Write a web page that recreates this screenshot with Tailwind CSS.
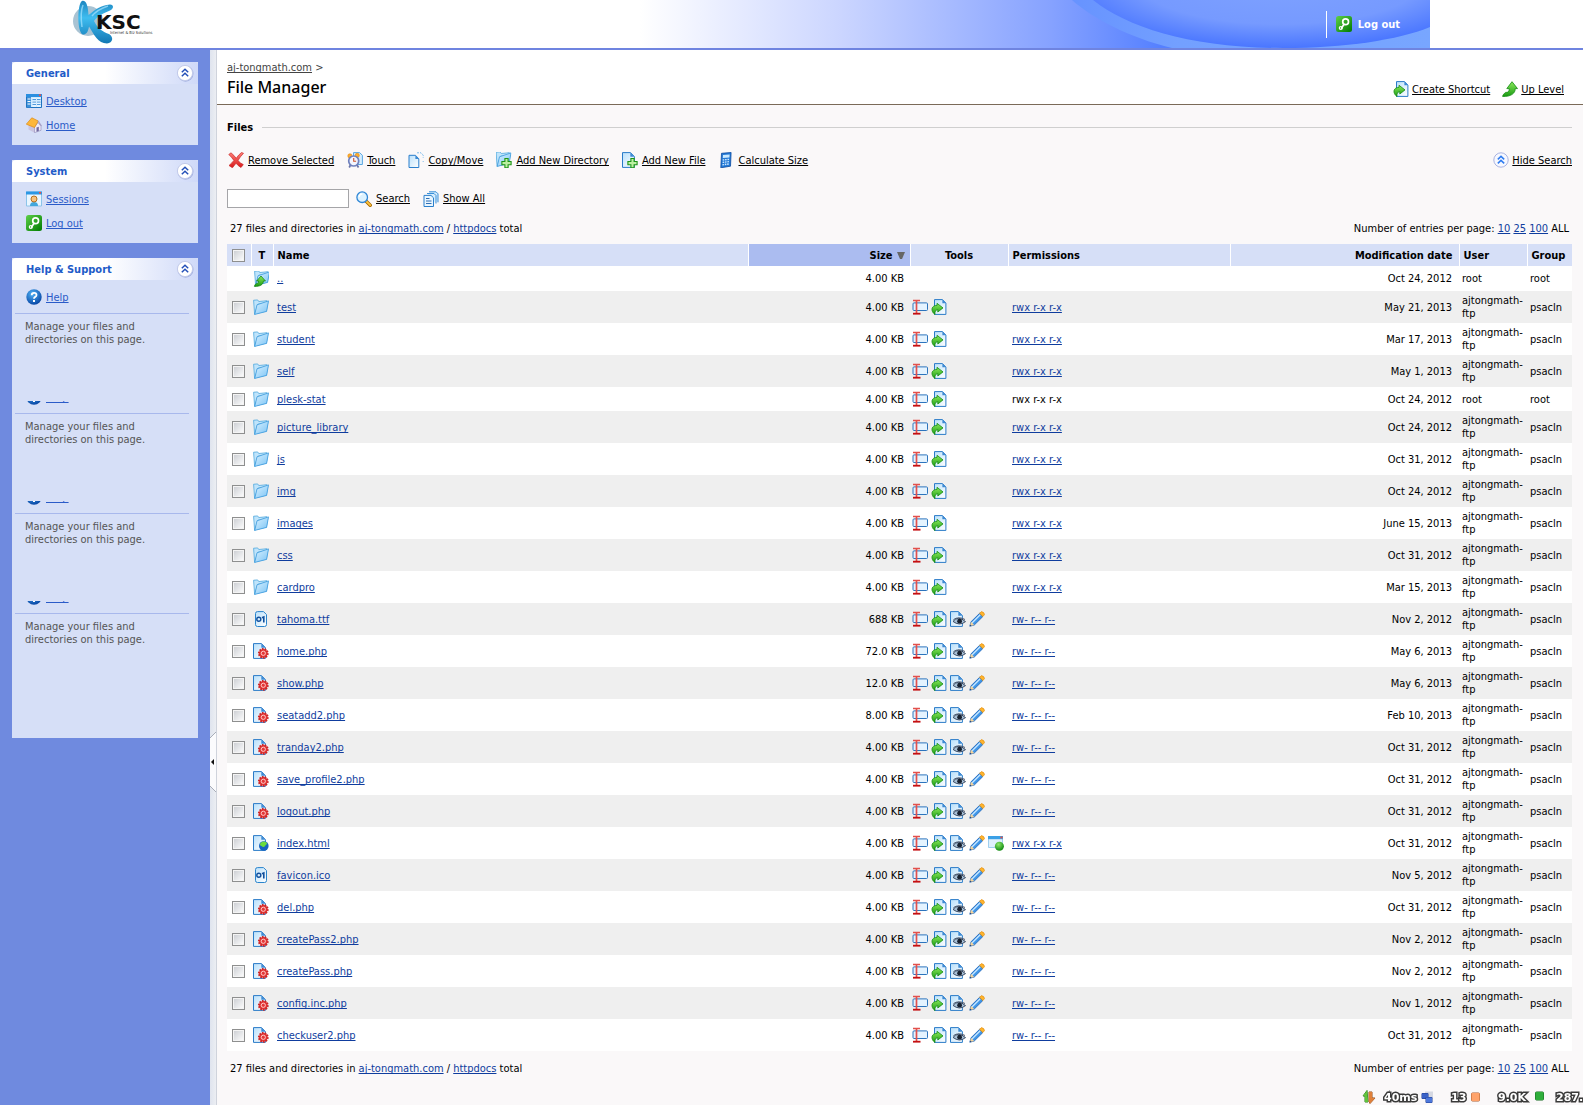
<!DOCTYPE html>
<html lang="en">
<head>
<meta charset="utf-8">
<title>File Manager</title>
<script src="https://cdn.jsdelivr.net/npm/@tailwindcss/browser@4"></script>
</head>
<body class="flex min-h-screen flex-col bg-[#faf8f9] font-['DejaVu_Sans_Condensed','Liberation_Sans',sans-serif] text-[11px] leading-[13px] text-black [text-decoration-skip-ink:none]">

<!-- Icon sprite; zero-sized rather than hidden, so that its gradients stay usable -->
<svg class="absolute size-0" aria-hidden="true">
  <defs>
    <linearGradient id="gBlue" x1="0" y1="0" x2="1" y2="1"><stop offset="0" stop-color="#d9f1ff"/><stop offset="1" stop-color="#7cc4f5"/></linearGradient>
    <linearGradient id="gPage" x1="0" y1="0" x2="1" y2="1"><stop offset="0" stop-color="#b9e0fb"/><stop offset="1" stop-color="#ffffff"/></linearGradient>
    <linearGradient id="gGreen" x1="0" y1="0" x2="0" y2="1"><stop offset="0" stop-color="#8bea5c"/><stop offset="1" stop-color="#1a9a12"/></linearGradient>
    <linearGradient id="gKey" x1="0" y1="0" x2="1" y2="1"><stop offset="0" stop-color="#5fd04a"/><stop offset="1" stop-color="#007a00"/></linearGradient>
    <linearGradient id="gRed" x1="0" y1="0" x2="0" y2="1"><stop offset="0" stop-color="#ff7f77"/><stop offset="1" stop-color="#d8191c"/></linearGradient>
    <radialGradient id="gHelp" cx=".4" cy=".3" r=".8"><stop offset="0" stop-color="#4fb2f5"/><stop offset="1" stop-color="#003a9c"/></radialGradient>
    <radialGradient id="gBall" cx=".4" cy=".3" r=".7"><stop offset="0" stop-color="#8ee86a"/><stop offset="1" stop-color="#0f8a10"/></radialGradient>
    <linearGradient id="gLogo" x1="0" y1="0" x2="0" y2="1"><stop offset="0" stop-color="#1d86c0"/><stop offset=".4" stop-color="#3fbdf0"/><stop offset="1" stop-color="#1277b4"/></linearGradient>
  </defs>
  <symbol id="folder" viewBox="0 0 16 16"><path d="M.6 1.2 4.6.9l1.2 1.6L14 1.7v1.8l1.4-.5-1.6 9.6L1.6 15.4Z" fill="#6fbcf0"/><path d="M.6 1.2 4.6.9l1.2 1.6 8-.8v2L5 5.2 1.6 15.4Z" fill="#bfe4fb" stroke="#5badde" stroke-width=".8"/><path d="M4 5.8 15.5 1.9 13.6 12.4 1.7 15.4Z" fill="url(#gBlue)" stroke="#3e9bdc" stroke-width=".8"/></symbol>
  <symbol id="folderup" viewBox="0 0 16 16"><use href="#folder" width="16" height="16" x="1" y="-1"/><path d="M8 5 12.5 10H10.4c0 3.400-3.200 5.700-9 5.400 0-1 1-2.200 2-3 1.400.4 2.200-.8 2.200-2.400H3.600Z" fill="url(#gGreen)" stroke="#0c7d0b" stroke-width=".7"/></symbol>
  <symbol id="page" viewBox="0 0 16 16"><path d="M2.500.6h8l3.900 4v10.800H2.500Z" fill="url(#gPage)" stroke="#2a7bc8"/><path d="M10.300.6v4.200h4Z" fill="#3d8ad4"/></symbol>
  <symbol id="php" viewBox="0 0 16 16"><use href="#page" width="16" height="16" x="-2"/><circle cx="10.300" cy="10.300" r="4.400" fill="#e23a3a" stroke="#cf2424" stroke-width="2" stroke-dasharray="1.600 1.100"/><circle cx="10.300" cy="10.300" r="2.100" fill="none" stroke="#ffc9c5" stroke-width="1"/></symbol>
  <symbol id="html" viewBox="0 0 16 16"><use href="#page" width="16" height="16" x="-2"/><circle cx="10.800" cy="11" r="4.800" fill="#1764c0"/><path d="M7 9c1-2.500 4-3.200 6.500-1.500 1.300 1.500-.5 2-1.500 3.500s-1.800 1-2.800.4S7 11 7 9Z" fill="#6bdc3c"/></symbol>
  <symbol id="bin" viewBox="0 0 16 16"><path d="M2.500 2.500q0-1.900 2-1.900h6l3 3v10q0 1.900-2 1.900h-7q-2 0-2-1.900Z" fill="url(#gPage)" stroke="#2a84cc"/><circle cx="5.800" cy="8.300" r="2" fill="none" stroke="#124f9c" stroke-width="1.400"/><path d="M9 6.800 10.800 6v5.500" fill="none" stroke="#124f9c" stroke-width="1.600"/></symbol>
  <symbol id="rename" viewBox="0 0 16 16"><rect x="1" y="3.900" width="14.500" height="7.600" rx="1" fill="#e4f3ff" stroke="#2c74bd"/><path d="M1 1.500h7M4.500 1.500v13" stroke="#e2504c" stroke-width="1.700"/><path d="M1 14.700h7.500" stroke="#c40f12" stroke-width="1.800"/></symbol>
  <symbol id="shortcut" viewBox="0 0 16 16"><path d="M3.500.6h8l3.400 3.500v11.300H3.500Z" fill="url(#gPage)" stroke="#2a7bc8"/><path d="M11.400.6v3.700h3.500Z" fill="#3d8ad4"/><path d="M6 4.300 12 8.900 6.800 13v-2.300C4.500 10.800 3.700 12.500 4 15.500 1 13.500-.3 9.300 2.600 7.300 3.600 6.600 4.800 6.400 6 6.400Z" fill="url(#gGreen)" stroke="#158c12" stroke-width=".8"/></symbol>
  <symbol id="view" viewBox="0 0 16 16"><use href="#page" width="16" height="16" x="-2"/><path d="M3 10.400q5-6.300 12.500.2-6 4.900-12.500-.2Z" fill="#a8c0d6" stroke="#2b3b55" stroke-width=".9"/><circle cx="9.600" cy="10.200" r="2.400" fill="#17202f"/><path d="M3.500 8.500q5.500-3.400 11.500 0" fill="none" stroke="#4c5a70"/></symbol>
  <symbol id="edit" viewBox="0 0 16 16"><path d="M.8 15.200 2 10.800 10.600 2.300l3.300 3.200-8.700 8.600Z" fill="#3f96e8" stroke="#1b62b8" stroke-width=".8"/><path d="M3 12 11.200 3.800" stroke="#c7e6ff" stroke-width="1.300"/><path d="m.8 15.200 1.200-4.400 3.200 3.300Z" fill="#f6d39a"/><path d="m.8 15.200.6-1.800 1.300 1.300Z" fill="#123c7c"/><path d="m10.600 2.300 1.900-1.700q2.800.6 3 3L13.900 5.500Z" fill="#ffb62e" stroke="#e38b09" stroke-width=".7"/></symbol>
  <symbol id="browse" viewBox="0 0 16 16"><path d="M.5 1.500h14v11H.5Z" fill="#dff0fc" stroke="#8cc4ea" stroke-width=".8"/><path d="M0 1h15v3.200H0Z" fill="#3ba0e6"/><path d="M12.500 1.600h2v1.800h-2Z" fill="#f04b3a"/><circle cx="11.400" cy="11.300" r="4.500" fill="url(#gBall)"/></symbol>
  <symbol id="remove" viewBox="0 0 16 16"><path d="M.8 2.500 3 .8Q6 3.200 8.200 6.300 10.500 2.800 13.500.5L15.500 1.300Q12 4.800 10 8.500 12.500 11.500 15.300 12.600L13 15.500Q10 13.800 8 11.200 6.200 13.600 4.400 15.800L1 13.500Q4 11 5.900 8.400 3.500 5 .8 2.500Z" fill="url(#gRed)" stroke="#c92a2a" stroke-width=".7"/></symbol>
  <symbol id="touch" viewBox="0 0 16 16"><path d="M6.500.6h6l2.900 2.700v9.200h-9Z" fill="#d5edfd" stroke="#5aa7e2"/><circle cx="2.900" cy="3.900" r="2.100" fill="#ffae2b" stroke="#e08610" stroke-width=".6"/><circle cx="10.200" cy="3.400" r="2.100" fill="#ffae2b" stroke="#e08610" stroke-width=".6"/><path d="m3.500 13-1.300 2.500M10 13l1.500 2.500" stroke="#6a74a8" stroke-width="1.700"/><circle cx="6.700" cy="9" r="5" fill="#f2f5ff" stroke="#6f80bd" stroke-width="1.700"/><path d="M6.700 6v3.300h2.400" fill="none" stroke="#d0552c" stroke-width="1.100"/></symbol>
  <symbol id="copy" viewBox="0 0 16 16"><path d="M9 .8h4l2.200 2.400v2.500M15.200 9v1" fill="none" stroke="#7fbdec" stroke-dasharray="2 1"/><path d="M1 3.300h6.500l3.300 3.500v8.700H1Z" fill="url(#gPage)" stroke="#2a7fcc"/><path d="M7.400 3.300v3.600h3.400Z" fill="#3d8ad4"/></symbol>
  <symbol id="plus" viewBox="0 0 16 16"><path d="M8.900 6.500h3.200v3h3v3.200h-3v3H8.900v-3h-3V9.500h3Z" fill="#bdf0a2" stroke="#1c9416" stroke-width="1.100"/></symbol>
  <symbol id="adddir" viewBox="0 0 16 16"><use href="#folder" width="16" height="16" y="-1" x="-.5"/><use href="#plus" width="16" height="16"/></symbol>
  <symbol id="addfile" viewBox="0 0 16 16"><use href="#page" width="16" height="16" x="-2"/><use href="#plus" width="16" height="16"/></symbol>
  <symbol id="calc" viewBox="0 0 16 16"><path d="M3.500 1.300 13.100.5 12.500 14.200 2.800 15.800Z" fill="#2379d6" stroke="#0b4a9f" stroke-width=".8"/><path d="m5 3 6.700-.6-.3 3-6.600.6Z" fill="#c9e9ff"/><path d="m4.700 8 6.700-.7M4.600 10.400l6.700-.8M4.400 12.900l6.700-1" stroke="#cde8ff" stroke-width="1.400" stroke-dasharray="1.600 .8"/></symbol>
  <symbol id="search" viewBox="0 0 16 16"><path d="m9.700 9.800 4.500 4.500" stroke="#a86a00" stroke-width="3.400" stroke-linecap="round"/><path d="m10.200 10.200 4 4" stroke="#ffc33f" stroke-width="1.900" stroke-linecap="round"/><circle cx="6.200" cy="6.200" r="5.300" fill="#dcf2ff" stroke="#2f86d6" stroke-width="1.300"/><path d="M3.300 6a3 3 0 0 1 3-3" fill="none" stroke="#fff" stroke-width="1.300"/></symbol>
  <symbol id="showall" viewBox="0 0 16 16"><path d="M6 .8h7l2 2v8.500M4 2.500h7l2 2v8" fill="#d5edfd" stroke="#3a8fd8"/><path d="M1 4.400h7l2.500 2.400v8.700H1Z" fill="#e9f6ff" stroke="#2a7fcc"/><path d="M3 7.500h3.500M3 10h5.500M3 12.500h5.500" stroke="#2f6fb5"/></symbol>
  <symbol id="uplevel" viewBox="0 0 16 16"><path d="M10 .7 15.500 7.600h-2.300c.2 4.800-4.500 8.300-12.600 7.800.3-1.600 1.600-3 3-4 2.700.3 3.700-1.200 3.700-3.800H4.800Z" fill="url(#gGreen)" stroke="#128a10" stroke-width=".8"/></symbol>
  <symbol id="key" viewBox="0 0 16 16"><rect width="16" height="16" rx="2.500" fill="url(#gKey)"/><circle cx="9.600" cy="5.800" r="2.900" fill="none" stroke="#fff" stroke-width="1.700"/><path d="M8.300 8 5 12.800" stroke="#fff" stroke-width="1.700"/><circle cx="4.800" cy="12" r="1.500" fill="none" stroke="#fff" stroke-width="1.200"/></symbol>
  <symbol id="desktop" viewBox="0 0 16 16"><path d="M.5 1.500h15v13H.5Z" fill="#cfeaff" stroke="#1e73c0"/><path d="M0 1h16v3H0Z" fill="#2b8fe0"/><path d="M13 1.500h2V3h-2Z" fill="#ff4a3a"/><path d="M1 4h4v10.500H1Z" fill="#3c8fd8"/><path d="M1.500 6h3M1.500 8.500h3M1.500 11h3M6.500 6H10M11 6h3.500M6.500 8.500H10M11 8.500h3.500M6.500 11H10M11 11h3.500M6.500 13H10M11 13h3.500" stroke="#fff"/><path d="M6.500 6.500H10M11 6.500h3.500M6.500 9H10M11 9h3.500M6.500 11.500H10M11 11.500h3.500" stroke="#3c8fd8" stroke-width=".9"/></symbol>
  <symbol id="home" viewBox="0 0 16 16"><path d="M2.500 7.500 8.500 10v5.700L2.500 12.500Z" fill="#c9c4e0"/><path d="M8.500 10 12 5.500l3 3.800v4L8.500 15.700Z" fill="#eeeaf8" stroke="#8d86b5" stroke-width=".6"/><path d="M.3 7.200 5.800.8 12.300 4 8.500 10.500Z" fill="#fdb73b" stroke="#dc8a12" stroke-width=".7"/><path d="m12 4 3.500 5" stroke="#a49dc4" stroke-width="1.200"/><path d="M10.500 10.500 12.800 9.700v4.200l-2.300.9Z" fill="#6f68a0"/></symbol>
  <symbol id="sessions" viewBox="0 0 16 16"><path d="M.5 1h15v14H.5Z" fill="#e9f6ff" stroke="#8cc4ea"/><path d="M0 .5h16v3H0Z" fill="#2b97e4"/><path d="M13 1h2v1.500h-2Z" fill="#ff4a3a"/><path d="M4 15q0-4 4-4t4 4Z" fill="#42a7dc"/><circle cx="8" cy="8" r="3" fill="#f8c27d" stroke="#b5701e" stroke-width="1"/></symbol>
  <symbol id="help" viewBox="0 0 16 16"><circle cx="8" cy="8" r="7.700" fill="url(#gHelp)"/><path d="M5.700 6.200q0-2.400 2.400-2.400t2.400 2.100q0 1.300-1.300 2T8 9.800" fill="none" stroke="#fff" stroke-width="1.800"/><path d="M7 11h2v2H7Z" fill="#fff"/></symbol>
  <symbol id="collapse" viewBox="0 0 18 18"><circle cx="9.500" cy="9.700" r="8" fill="#7f8fcf" opacity=".55"/><circle cx="9" cy="9" r="7.600" fill="#fff" stroke="#c3cbea"/><path d="m5.800 8.300 3.200-3 3.200 3M5.800 12.300l3.200-3 3.200 3" fill="none" stroke="#2450b8" stroke-width="1.500"/></symbol>
  <symbol id="hide" viewBox="0 0 16 16"><circle cx="8" cy="8" r="7.200" fill="#f6f8ff" stroke="#a9b3e0"/><path d="m4.800 7.400 3.200-3 3.200 3M4.800 11.400l3.200-3 3.200 3" fill="none" stroke="#2f7cf0" stroke-width="1.500"/></symbol>
</svg>

<header class="flex h-[50px] shrink-0 border-b-2 border-[#6f84e0] bg-white">
  <a href="#" class="ml-[70px] block" aria-label="KSC Internet &amp; Biz Solutions">
    <svg class="h-12 w-[86px]" viewBox="0 0 86 48">
      <circle cx="18" cy="21" r="15" fill="#a9c3d3"/>
      <path d="M12 1c4-1 6 4 6.500 14C25 10 31 5 40 4.500c4 .5 4 4 0 6-6 2.500-12 5-16 10.500 4 8 9 11 15 13 5 3 4 9-2 9.500-9 0-13-9-18-17-1 6-3 8-6 8C7 33 7 4 12 1Z" fill="url(#gLogo)"/>
      <path d="M13 5c-2 5-2 15-1 22M38 6c-6 2-12 5-16 10" fill="none" stroke="#a5e4ff" stroke-width="1.500" opacity=".7"/>
      <text x="26" y="29" font-family="'DejaVu Sans'" font-weight="700" font-size="20" fill="#111">KSC</text>
      <text x="40" y="34" font-family="'DejaVu Sans Condensed'" font-size="4" fill="#333">Internet &amp; Biz Solutions</text>
    </svg>
  </a>
  <div class="relative mr-[153px] ml-auto flex w-[790px] items-center justify-end">
    <svg class="absolute inset-0 h-full w-full" viewBox="0 0 790 48" preserveAspectRatio="none">
      <defs>
        <linearGradient id="hb"><stop offset="0" stop-color="#fff"/><stop offset=".25" stop-color="#ccd6ff"/><stop offset=".52" stop-color="#86a2ff"/><stop offset=".66" stop-color="#5580ff"/><stop offset="1" stop-color="#5580ff"/></linearGradient>
        <radialGradient id="hs" cx="0" cy="0" r="1" gradientUnits="userSpaceOnUse" gradientTransform="translate(640 -20) scale(220 68)"><stop offset="0" stop-color="#7fa2ff"/><stop offset=".65" stop-color="#769aff"/><stop offset="1" stop-color="#4a76ff"/></radialGradient>
        <linearGradient id="hr"><stop offset="0" stop-color="#6793ff"/><stop offset=".3" stop-color="#73a0ff"/><stop offset="1" stop-color="#78a6ff"/></linearGradient>
      </defs>
      <path d="M0 0h790v48H0Z" fill="url(#hb)"/>
      <path d="M432 0c20 18 58 38 100 48h258V0Z" fill="url(#hr)"/>
      <path d="M453 0c35 28 100 48 190 48 62 0 115-8 147-21V0Z" fill="url(#hs)"/>
    </svg>
    <a href="#" class="relative mr-[30px] flex h-[27px] items-center gap-[6px] border-l border-white pl-[9px] font-bold text-white"><svg class="size-4"><use href="#key"/></svg>Log out</a>
  </div>
</header>

<div class="flex grow">
  <nav class="w-[210px] shrink-0 bg-[#6f8adf] px-3 pt-3 text-[#2a5bc8]">
    <section class="mb-[15px] h-[83px] bg-[#d6dff7]">
      <h2 class="flex h-[22px] items-center justify-between rounded-t-sm bg-linear-to-r from-white from-50% to-[#cfd9f8] pr-1 pl-[14px] font-bold text-[#1f5cc8]">General<button type="button" aria-label="Collapse General"><svg class="size-[18px]"><use href="#collapse"/></svg></button></h2>
      <ul class="pt-[5px] pl-[14px]">
        <li class="flex h-6 items-center gap-1"><svg class="size-4"><use href="#desktop"/></svg><a href="#" class="underline underline-offset-1">Desktop</a></li>
        <li class="flex h-6 items-center gap-1"><svg class="size-4"><use href="#home"/></svg><a href="#" class="underline underline-offset-1">Home</a></li>
      </ul>
    </section>
    <section class="mb-[15px] h-[83px] bg-[#d6dff7]">
      <h2 class="flex h-[22px] items-center justify-between rounded-t-sm bg-linear-to-r from-white from-50% to-[#cfd9f8] pr-1 pl-[14px] font-bold text-[#1f5cc8]">System<button type="button" aria-label="Collapse System"><svg class="size-[18px]"><use href="#collapse"/></svg></button></h2>
      <ul class="pt-[5px] pl-[14px]">
        <li class="flex h-6 items-center gap-1"><svg class="size-4"><use href="#sessions"/></svg><a href="#" class="underline underline-offset-1">Sessions</a></li>
        <li class="flex h-6 items-center gap-1"><svg class="size-4"><use href="#key"/></svg><a href="#" class="underline underline-offset-1">Log out</a></li>
      </ul>
    </section>
    <section class="h-[480px] bg-[#d6dff7]">
      <h2 class="flex h-[22px] items-center justify-between rounded-t-sm bg-linear-to-r from-white from-50% to-[#cfd9f8] pr-1 pl-[14px] font-bold text-[#1f5cc8]">Help &amp; Support<button type="button" aria-label="Collapse Help and Support"><svg class="size-[18px]"><use href="#collapse"/></svg></button></h2>
      <div id="helpBlocks"></div>
    </section>
  </nav>

  <div class="relative w-[7px] shrink-0 border-r border-[#cfd3dc] bg-linear-to-r from-[#dfe4ee] to-[#eceef3]">
    <button type="button" aria-label="Hide sidebar" class="absolute top-[682px] left-0 block"><svg class="h-[60px] w-[6px]" viewBox="0 0 6 60"><path d="M6 0 0 6v48l6 6Z" fill="#fbfbfd"/><path d="M6 0 0 6M0 54l6 6" stroke="#a8adb8"/><path d="M4 27v6L1 30Z" fill="#111"/></svg></button>
  </div>

  <main class="grow">
    <div class="flex h-[55px] items-end justify-between border-b border-[#7a6a58] bg-white pr-[19px] pl-[10px]">
      <div class="pb-[7px]">
        <p class="text-[#444]"><a href="#" class="underline underline-offset-1">aj-tongmath.com</a> &gt;</p>
        <h1 class="mt-[3px] font-['Noto_Sans'] text-[16px] leading-[20px] font-medium">File Manager</h1>
      </div>
      <div class="flex gap-3 pb-[7px]">
        <a href="#" class="flex items-center gap-[3px]"><svg class="size-4"><use href="#shortcut"/></svg><span class="underline underline-offset-1">Create Shortcut</span></a>
        <a href="#" class="flex items-center gap-[3px]"><svg class="size-4"><use href="#uplevel"/></svg><span class="underline underline-offset-1">Up Level</span></a>
      </div>
    </div>

    <div class="pr-[11px] pl-[10px]">
      <div class="flex h-[44px] items-center gap-[9px]"><h2 class="font-bold">Files</h2><span class="h-px grow bg-[#cfcfcf]"></span></div>

      <div class="mt-[3px] flex h-4 items-center justify-between">
        <div id="toolbar" class="flex gap-[13px] pl-px"></div>
        <button type="button" class="flex items-center gap-[3px]"><svg class="size-4"><use href="#hide"/></svg><span class="underline underline-offset-1">Hide Search</span></button>
      </div>

      <form class="mt-[21px] flex h-[19px] items-center">
        <input type="text" aria-label="Search files" class="h-[19px] w-[122px] border border-[#a5a5a8] bg-white px-1">
        <button type="button" class="ml-[7px] flex items-center gap-1"><svg class="size-4"><use href="#search"/></svg><span class="underline underline-offset-1">Search</span></button>
        <button type="button" class="ml-[13px] flex items-center gap-1"><svg class="size-4"><use href="#showall"/></svg><span class="underline underline-offset-1">Show All</span></button>
      </form>

      <div class="mt-[14px] mb-[9px] flex justify-between pr-[3px] pl-[3px]">
        <p>27 files and directories in <a href="#" class="text-[#0f3d9e] underline underline-offset-1">aj-tongmath.com</a> / <a href="#" class="text-[#0f3d9e] underline underline-offset-1">httpdocs</a> total</p>
        <p>Number of entries per page: <a href="#" class="text-[#0f3d9e] underline underline-offset-1">10</a> <a href="#" class="text-[#0f3d9e] underline underline-offset-1">25</a> <a href="#" class="text-[#0f3d9e] underline underline-offset-1">100</a> ALL</p>
      </div>

      <table class="w-full table-fixed border-collapse">
        <colgroup><col class="w-[24px]"><col class="w-[22px]"><col><col class="w-[162px]"><col class="w-[98px]"><col class="w-[222px]"><col class="w-[229px]"><col class="w-[68px]"><col class="w-[45px]"></colgroup>
        <thead>
          <tr class="h-[22px] bg-[#d6dff7] text-left">
            <th class="border-r border-white pl-[5px]"><input type="checkbox" aria-label="Select all" class="block size-[13px] appearance-none border border-[#8e8f8f] bg-linear-to-br from-[#c9ccd1] to-white shadow-[inset_0_0_0_1px_#f4f4f4]"></th>
            <th class="border-r border-white text-center">T</th>
            <th class="border-r border-white pl-1">Name</th>
            <th class="border-r border-white bg-[#abbcf0] pr-[5px] text-right"><span class="inline-flex items-center gap-1">Size<svg class="h-[7px] w-2" viewBox="0 0 8 7"><path d="M0 0h8L5 7H3Z" fill="#666"/></svg></span></th>
            <th class="border-r border-white text-center">Tools</th>
            <th class="border-r border-white pl-1">Permissions</th>
            <th class="border-r border-white pr-[6px] text-right">Modification date</th>
            <th class="border-r border-white pl-1">User</th>
            <th class="pl-1">Group</th>
          </tr>
        </thead>
        <tbody id="rows"></tbody>
      </table>

      <div class="mt-[11px] flex justify-between pr-[3px] pl-[3px]">
        <p>27 files and directories in <a href="#" class="text-[#0f3d9e] underline underline-offset-1">aj-tongmath.com</a> / <a href="#" class="text-[#0f3d9e] underline underline-offset-1">httpdocs</a> total</p>
        <p>Number of entries per page: <a href="#" class="text-[#0f3d9e] underline underline-offset-1">10</a> <a href="#" class="text-[#0f3d9e] underline underline-offset-1">25</a> <a href="#" class="text-[#0f3d9e] underline underline-offset-1">100</a> ALL</p>
      </div>
    </div>
  </main>
</div>

<!-- Network status overlay -->
<aside class="fixed right-0 bottom-0 flex h-4 w-[221px] items-center overflow-hidden font-['DejaVu_Sans'] font-bold whitespace-nowrap text-white [paint-order:stroke_fill] [-webkit-text-stroke:3px_#3a3a3a]">
  <svg class="mr-2 h-[14px] w-[14px] shrink-0" viewBox="0 0 14 14"><path d="M5 .5 1 6h2v6h3Z" fill="#5fc43c" stroke="#2b7a1c"/><path d="M7 2h3v6h3l-5 5.500-1-2Z" fill="#e0803a" stroke="#8f4a17"/></svg>
  <span class="w-[37px] shrink-0">40ms</span>
  <svg class="mr-[17px] h-[13px] w-[13px] shrink-0" viewBox="0 0 13 13"><path d="M4 .5h8v7H4Z" fill="#d5d8e2"/><path d="M1 2.500h6v5H1Z" fill="#3a62c8" stroke="#1e3c90"/><path d="M5 6.500h6v5H5Z" fill="#4d78dc" stroke="#1e3c90"/></svg>
  <span class="w-[20px] shrink-0">13</span>
  <svg class="mr-[17px] h-[10px] w-[10px] shrink-0" viewBox="0 0 10 10"><rect x=".5" y="1" width="8" height="8" rx="1" fill="#ffa36b" stroke="#a85c30"/></svg>
  <span class="w-[37px] shrink-0">9.0K</span>
  <svg class="mr-[11px] h-[13px] w-[10px] shrink-0" viewBox="0 0 10 13"><rect x=".5" y="1" width="8" height="8" rx="1" fill="#2fae3c" stroke="#176a20"/></svg>
  <span class="shrink-0">287.</span>
</aside>

<script>
const icon = id => `<svg class="size-4 shrink-0"><use href="#${id}"/></svg>`;

document.getElementById('toolbar').innerHTML = [
  ['remove', 'Remove Selected'], ['touch', 'Touch'], ['copy', 'Copy/Move'],
  ['adddir', 'Add New Directory'], ['addfile', 'Add New File'], ['calc', 'Calculate Size'],
].map(([i, label]) => `<button type="button" class="flex items-center gap-1">${icon(i)}<span class="underline underline-offset-1">${label}</span></button>`).join('');

// The help link repeats; every copy after the first shows only its lower edge.
document.getElementById('helpBlocks').innerHTML = [0, 1, 2, 3].map(n => `
  <div class="${n ? 'mt-[57px] h-[12px]' : 'h-[33px]'} flex flex-col justify-end overflow-hidden pb-2 pl-[14px]">
    <div class="${n ? 'h-[5px]' : 'h-4'} flex items-end overflow-hidden">
      <div class="flex items-center gap-1">${icon('help')}<a href="#" class="underline underline-offset-1">Help</a></div>
    </div>
  </div>
  <p class="mr-[9px] ml-[3px] h-[31px] border-t border-[#a8b8ec] pt-[6px] pl-[10px] text-[#555]">Manage your files and<br>directories on this page.</p>`).join('');

// name, size, date, type, [owner]
const files = [
  ['..', '4.00', 'Oct 24, 2012', 'folderup', 'root'],
  ['test', '4.00', 'May 21, 2013', 'folder'],
  ['student', '4.00', 'Mar 17, 2013', 'folder'],
  ['self', '4.00', 'May 1, 2013', 'folder'],
  ['plesk-stat', '4.00', 'Oct 24, 2012', 'folder', 'root'],
  ['picture_library', '4.00', 'Oct 24, 2012', 'folder'],
  ['js', '4.00', 'Oct 31, 2012', 'folder'],
  ['img', '4.00', 'Oct 24, 2012', 'folder'],
  ['images', '4.00', 'June 15, 2013', 'folder'],
  ['css', '4.00', 'Oct 31, 2012', 'folder'],
  ['cardpro', '4.00', 'Mar 15, 2013', 'folder'],
  ['tahoma.ttf', '688', 'Nov 2, 2012', 'bin'],
  ['home.php', '72.0', 'May 6, 2013', 'php'],
  ['show.php', '12.0', 'May 6, 2013', 'php'],
  ['seatadd2.php', '8.00', 'Feb 10, 2013', 'php'],
  ['tranday2.php', '4.00', 'Oct 31, 2012', 'php'],
  ['save_profile2.php', '4.00', 'Oct 31, 2012', 'php'],
  ['logout.php', '4.00', 'Oct 31, 2012', 'php'],
  ['index.html', '4.00', 'Oct 31, 2012', 'html'],
  ['favicon.ico', '4.00', 'Nov 5, 2012', 'bin'],
  ['del.php', '4.00', 'Oct 31, 2012', 'php'],
  ['createPass2.php', '4.00', 'Nov 2, 2012', 'php'],
  ['createPass.php', '4.00', 'Nov 2, 2012', 'php'],
  ['config.inc.php', '4.00', 'Nov 1, 2012', 'php'],
  ['checkuser2.php', '4.00', 'Oct 31, 2012', 'php'],
];
document.getElementById('rows').innerHTML = files.map(([name, size, date, type, owner], n) => {
  const up = type === 'folderup', dir = up || type === 'folder', html = type === 'html';
  const tools = up ? [] : ['rename', 'shortcut', ...(dir ? [] : ['view', 'edit']), ...(html ? ['browse'] : [])];
  const perm = up ? '' : dir || html ? 'rwx r-x r-x' : 'rw- r-- r--';
  const height = up ? 'h-[25px]' : owner ? 'h-[24px]' : 'h-[32px]';
  return `<tr class="${height} ${n % 2 ? 'bg-[#efefef]' : 'bg-white'}">
    <td class="pl-[5px]">${up ? '' : `<input type="checkbox" aria-label="Select ${name}" class="block size-[13px] appearance-none border border-[#8e8f8f] bg-linear-to-br from-[#c9ccd1] to-white shadow-[inset_0_0_0_1px_#f4f4f4]">`}</td>
    <td class="pl-[2px]">${icon(type)}</td>
    <td class="pl-1"><a href="#" class="text-[#0f3d9e] underline underline-offset-1">${name}</a></td>
    <td class="pr-[6px] text-right">${size} KB</td>
    <td class="pl-[2px]"><div class="flex gap-[3px]">${tools.map(t => `<button type="button" aria-label="${t}">${icon(t)}</button>`).join('')}</div></td>
    <td class="pl-1">${owner || !perm ? perm : `<a href="#" class="text-[#0f3d9e] underline underline-offset-1">${perm}</a>`}</td>
    <td class="pr-[7px] text-right">${date}</td>
    <td class="pl-[3px]">${owner || 'ajtongmath-<br>ftp'}</td>
    <td class="pl-[3px]">${owner || 'psacln'}</td>
  </tr>`;
}).join('');
</script>
</body>
</html>
